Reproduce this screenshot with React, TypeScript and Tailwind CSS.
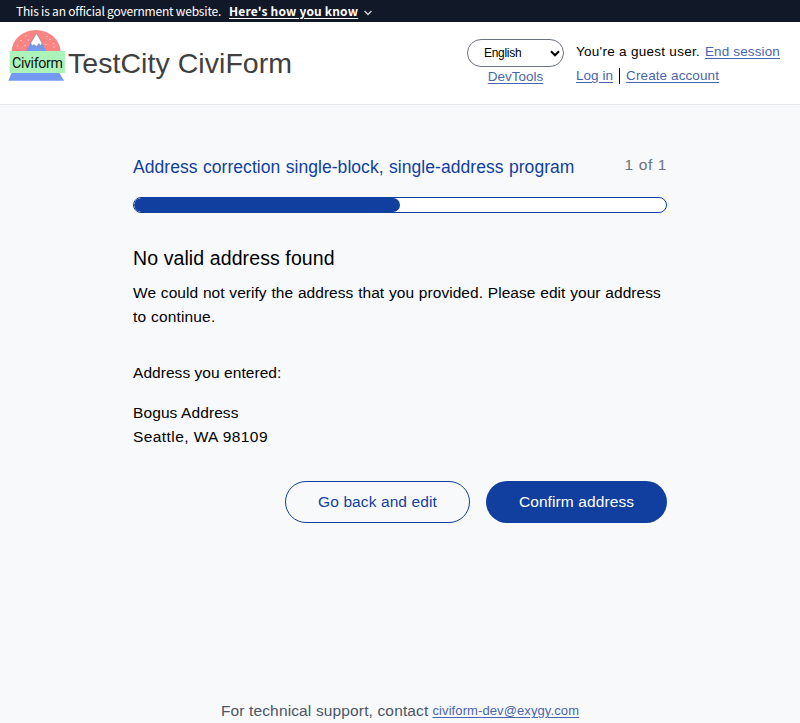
import React from "react";

const link = "text-[#4a65b0] underline underline-offset-2";

function Logo() {
  return (
    <svg width="58" height="52" viewBox="0 0 58 52" className="block shrink-0" aria-label="Civiform logo">
      <path d="M3.5 22A24.5 22 0 0 1 52.5 22Z" fill="#fa8383" />
      <path d="M17.5 22 28 3.5 39 22Z" fill="#7499f0" />
      <path d="M22.8 13 28.5 3.3 34 13 33 16 31 13.5 28.5 16.5 26 14.5 24 16Z" fill="#fff" stroke="#777" strokeWidth=".5" />
      <g fill="#ffd0cd">
        {[[13, 10.5], [18, 6], [9.5, 16], [17, 15.5], [20.5, 10], [39, 6.5], [38, 14.5], [45.5, 13.5], [42, 9.5], [46, 17]].map(([x, y]) => (
          <circle key={`${x}-${y}`} cx={x} cy={y} r=".8" />
        ))}
      </g>
      <path d="M3.5 43H51.5L56 50.7H0.3Z" fill="#7499f0" />
      <rect x="1.6" y="21" width="55.4" height="22" fill="#abf3b9" />
      <text x="4" y="38" textLength="51" fontSize="14.2" fontFamily="Roboto, sans-serif" fill="#111">Civiform</text>
    </svg>
  );
}

export default function App() {
  return (
    <div className="flex h-[723px] flex-col overflow-hidden bg-[#f8f9fb] font-['Liberation_Sans',sans-serif] text-[15.5px] leading-6 text-black">
      <div className="flex h-[22px] shrink-0 items-center whitespace-nowrap bg-[#111827] pl-4 font-['Noto_Sans_CJK_SC',sans-serif] text-[12px] leading-[22px] text-white">
        <span className="w-[205px] tracking-[-0.2px]">This is an official government website.</span>
        <span className="ml-2 w-[129px] font-bold tracking-[0.17px] underline underline-offset-2">Here's how you know</span>
        <svg width="8" height="6" viewBox="0 0 8 6" className="ml-1.5 mt-[3px]" fill="none" stroke="#d1d5db" strokeWidth="1.4">
          <path d="M.6 1 4 4.4 7.4 1" />
        </svg>
      </div>
      <header className="flex h-[83px] shrink-0 items-start border-b border-[#e5e7eb] bg-white pl-2">
        <div className="mt-2 flex items-start">
          <Logo />
          <h1 className="ml-0.5 mt-[15px] whitespace-nowrap text-[28.5px] leading-9 tracking-[0.05px] text-[#404040]">TestCity CiviForm</h1>
        </div>
        <div className="ml-auto mt-[17px] flex w-[97px] flex-col items-center">
          <div className="flex h-7 w-full items-center justify-between rounded-full border border-[#6b7280] pl-4 pr-[3px] text-xs tracking-[-0.3px]">
            <span>English</span>
            <svg width="10" height="7" viewBox="0 0 10 7" fill="none" stroke="#000" strokeWidth="2">
              <path d="M1 1.3 5 5.3 9 1.3" />
            </svg>
          </div>
          <a className={`${link} text-[13.5px] leading-5`}>DevTools</a>
        </div>
        <div className="ml-3 mr-5 mt-[18px] w-[204px] whitespace-nowrap text-[13.5px] leading-6">
          <div className="flex justify-between"><span className="tracking-[0.28px]">You're a guest user.</span><a className={`${link} tracking-[0.14px]`}>End session</a></div>
          <div className="flex items-center"><a className={`${link} tracking-[0.05px]`}>Log in</a><span className="mx-1.5 h-4 w-px bg-black" /><a className={`${link} tracking-[0.1px]`}>Create account</a></div>
        </div>
      </header>
      <main className="mx-auto flex w-[534px] grow flex-col whitespace-nowrap pt-12">
        <div className="flex justify-between">
          <h2 className="text-[17.5px] leading-7 tracking-[0.05px] [word-spacing:0.5px] text-[#113f9f]">Address correction single-block, single-address program</h2>
          <span className="tracking-[0.6px] text-[#6b7280]">1 of 1</span>
        </div>
        <div className="mt-4 h-4 overflow-hidden rounded-full border border-[#113f9f] bg-white">
          <div className="h-full w-1/2 rounded-full bg-[#113f9f]" />
        </div>
        <h3 className="mt-[31px] text-[19.5px] leading-7 tracking-[0.1px]">No valid address found</h3>
        <p className="mt-[9px] tracking-[0.05px] [word-spacing:0.4px]">We could not verify the address that you provided. Please edit your address<br /><span className="tracking-[0.15px]">to continue.</span></p>
        <p className="mt-8 tracking-[0.05px]">Address you entered:</p>
        <p className="mt-4 tracking-[0.1px]">Bogus Address<br /><span className="tracking-[0.42px]">Seattle, WA 98109</span></p>
        <div className="mt-8 flex justify-end gap-4">
          <button className="h-[42px] w-[185px] rounded-full border border-[#113f9f] tracking-[0.1px] text-[#113f9f]">Go back and edit</button>
          <button className="h-[42px] w-[181px] rounded-full bg-[#113f9f] tracking-[0.1px] text-white">Confirm address</button>
        </div>
      </main>
      <footer className="flex h-6 shrink-0 items-center justify-center gap-1 whitespace-nowrap text-[#4b5563]">
        <span className="tracking-[0.14px]">For technical support, contact</span>
        <a className={`${link} text-[13px] tracking-[0.1px]`}>civiform-dev@exygy.com</a>
      </footer>
    </div>
  );
}
